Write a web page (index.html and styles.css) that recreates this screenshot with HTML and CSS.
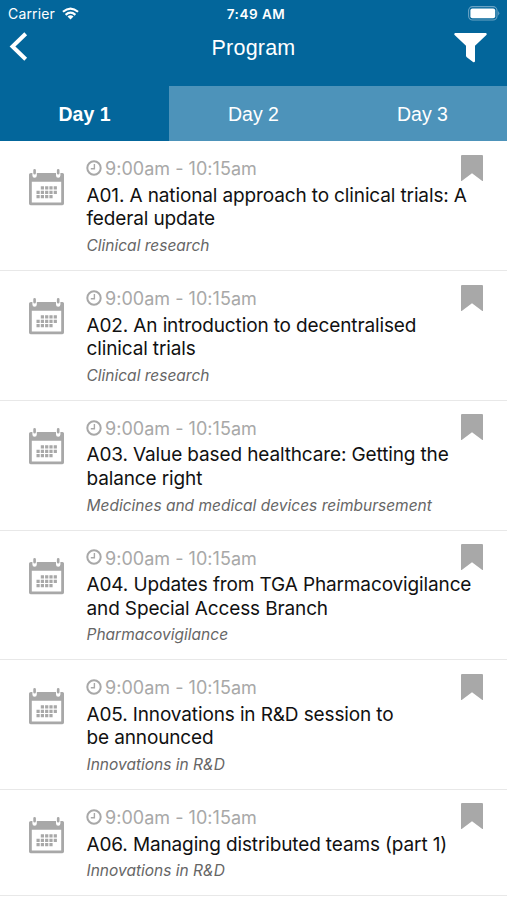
FILE: index.html
```html
<!DOCTYPE html>
<html lang="en">
<head>
<meta charset="utf-8">
<title>Program</title>
<link rel="stylesheet" href="styles.css">
</head>
<body>
<svg class="sprite" aria-hidden="true">
  <symbol id="calendar" viewBox="0 0 36 37">
    <path fill="#a8a8a8" fill-rule="evenodd" d="M2 4H33.5Q35 4 35 5.5V34.5Q35 36.2 33.3 36.2H1.7Q0 36.2 0 34.5V5.5Q0 4 2 4ZM2.8 12.7V33.4H32.2V12.7Z"/>
    <path stroke="#fff" stroke-width="4.4" stroke-linecap="round" d="M5.6 2.5V6.5M29.2 2.5V6.5"/>
    <path stroke="#a8a8a8" stroke-width="2.6" stroke-linecap="round" d="M5.6 1.3V4.2M29.2 1.3V4.2"/>
    <path stroke="#a8a8a8" stroke-width="3.2" stroke-dasharray="3.2 1.1" d="M11.8 18.8H28M7.5 23.3H28M7.5 27.7H23.7"/>
  </symbol>
  <symbol id="clock" viewBox="0 0 16 16">
    <circle cx="8" cy="8" r="6.7" fill="none" stroke="#a8a8a8" stroke-width="2"/>
    <path fill="none" stroke="#a8a8a8" stroke-width="1.4" d="M8.4 4V8.8H4.8"/>
  </symbol>
  <symbol id="bookmark" viewBox="0 0 22 27">
    <path fill="#a8a8a8" d="M1 0H21Q22 0 22 1V25.5Q22 26.5 21 25.8L11 18.3L1 25.8Q0 26.5 0 25.5V1Q0 0 1 0Z"/>
  </symbol>
</svg>
<header class="header">
  <div class="status">
    <div class="carrier"><span class="carrier-name">Carrier</span>
      <svg class="wifi" viewBox="0 0 18 13" fill="none" stroke="#fff" stroke-width="2.3"><path d="M1 4.7Q9-2.2 17 4.7M3.8 7.9Q9 3.4 14.2 7.9"/><path fill="#fff" stroke="none" d="M5.8 9.6Q9 7 12.2 9.6L9 12.8Z"/></svg>
    </div>
    <span class="clock-time">7:49 AM</span>
    <svg class="battery" viewBox="0 0 32 15"><rect x=".6" y=".6" width="28.4" height="13.4" rx="4" fill="none" stroke="#6aa3c4" stroke-width="1.1"/><rect x="2.4" y="2.4" width="24.8" height="9.8" rx="2" fill="#fff"/><path fill="#6aa3c4" d="M30.2 5Q32.4 7.3 30.2 9.6Z"/></svg>
  </div>
  <div class="nav">
    <svg class="back" viewBox="0 0 18 29" fill="none" stroke="#fff" stroke-width="4"><path d="M16.2 1.8L3 14.5L16.2 27.2"/></svg>
    <h1 class="title">Program</h1>
    <svg class="filter" viewBox="0 0 33 30"><path fill="#fff" d="M1.2 0H31.8Q33.4 .6 32.4 2L21 12.8V28.2Q20.6 29.8 19 29L12.8 24.2Q12 23.5 12 22.5V12.8L.6 2Q-.4 .6 1.2 0Z"/></svg>
  </div>
  <nav class="tabs"><span class="tab active">Day 1</span><span class="tab">Day 2</span><span class="tab">Day 3</span></nav>
</header>
<main class="list">
  <article class="item">
    <svg class="calendar"><use href="#calendar"/></svg>
    <div class="body"><div class="time"><svg class="clock"><use href="#clock"/></svg><span class="hours">9:00am - 10:15am</span></div>
      <h2 class="name"><span>A01. A national approach to clinical trials: A</span><br><span>federal update</span></h2><p class="track">Clinical research</p></div>
    <svg class="bookmark"><use href="#bookmark"/></svg>
  </article>
  <article class="item">
    <svg class="calendar"><use href="#calendar"/></svg>
    <div class="body"><div class="time"><svg class="clock"><use href="#clock"/></svg><span class="hours">9:00am - 10:15am</span></div>
      <h2 class="name"><span>A02. An introduction to decentralised</span><br><span>clinical trials</span></h2><p class="track">Clinical research</p></div>
    <svg class="bookmark"><use href="#bookmark"/></svg>
  </article>
  <article class="item">
    <svg class="calendar"><use href="#calendar"/></svg>
    <div class="body"><div class="time"><svg class="clock"><use href="#clock"/></svg><span class="hours">9:00am - 10:15am</span></div>
      <h2 class="name"><span>A03. Value based healthcare: Getting the</span><br><span>balance right</span></h2><p class="track">Medicines and medical devices reimbursement</p></div>
    <svg class="bookmark"><use href="#bookmark"/></svg>
  </article>
  <article class="item">
    <svg class="calendar"><use href="#calendar"/></svg>
    <div class="body"><div class="time"><svg class="clock"><use href="#clock"/></svg><span class="hours">9:00am - 10:15am</span></div>
      <h2 class="name"><span>A04. Updates from TGA Pharmacovigilance</span><br><span>and Special Access Branch</span></h2><p class="track">Pharmacovigilance</p></div>
    <svg class="bookmark"><use href="#bookmark"/></svg>
  </article>
  <article class="item">
    <svg class="calendar"><use href="#calendar"/></svg>
    <div class="body"><div class="time"><svg class="clock"><use href="#clock"/></svg><span class="hours">9:00am - 10:15am</span></div>
      <h2 class="name"><span>A05. Innovations in R&amp;D session to</span><br><span>be announced</span></h2><p class="track">Innovations in R&amp;D</p></div>
    <svg class="bookmark"><use href="#bookmark"/></svg>
  </article>
  <article class="item">
    <svg class="calendar"><use href="#calendar"/></svg>
    <div class="body"><div class="time"><svg class="clock"><use href="#clock"/></svg><span class="hours">9:00am - 10:15am</span></div>
      <h2 class="name"><span>A06. Managing distributed teams (part 1)</span></h2><p class="track">Innovations in R&amp;D</p></div>
    <svg class="bookmark"><use href="#bookmark"/></svg>
  </article>
</main>
</body>
</html>
```
FILE: styles.css
```css
* { box-sizing: border-box; }
body { margin: 0; width: 507px; height: 900px; overflow: hidden; background: #fff; font-family: Inter, "Liberation Sans", sans-serif; }
h1, h2, p { margin: 0; font-weight: 400; }
svg { display: block; flex: none; }
.sprite { display: none; }
.header { height: 141.4px; background: #03669b; color: #fff; display: flex; flex-direction: column; }
.status { height: 27px; display: grid; grid-template-columns: 1fr auto 1fr; align-items: center; padding: 0 7px 0 8px; font-size: 14px; white-space: nowrap; }
.carrier { display: flex; align-items: center; gap: 7px; }
.carrier-name { letter-spacing: .15px; }
.wifi { width: 17px; height: 13px; }
.clock-time { font-size: 13.5px; font-weight: 600; letter-spacing: .5px; padding-left: 4px; }
.battery { width: 32px; height: 15px; justify-self: end; }
.nav { height: 59.4px; display: grid; grid-template-columns: 1fr auto 1fr; align-items: start; padding: 4px 20px 0 9px; }
.back { width: 19px; height: 29px; margin-top: .5px; }
.title { font: 21.5px/34px "Liberation Sans", sans-serif; letter-spacing: .2px; padding-left: 11px; }
.filter { width: 33px; height: 30px; margin-top: 2px; justify-self: end; }
.tabs { flex: 1; display: grid; grid-template-columns: repeat(3, 1fr); font: 19.5px "Liberation Sans", sans-serif; }
.tab { display: flex; align-items: center; justify-content: center; padding-top: 2px; background: #4d93ba; }
.active { background: transparent; font-weight: 700; }
.item { display: flex; align-items: flex-start; border-bottom: 1px solid #e8e8e8; padding: 13px 24px 10.3px 29px; }
.calendar { width: 36px; height: 37px; margin: 14.3px 21.5px 0 0; }
.body { flex: 1; min-width: 0; white-space: nowrap; }
.time { display: flex; align-items: center; gap: 3px; height: 29px; font-size: 18px; color: #a8a8a8; }
.clock { width: 16px; height: 16px; margin: -1.4px 0 0 -.5px; }
.hours { letter-spacing: .03px; }
.name { padding-top: .6px; font-size: 19px; line-height: 23.4px; color: #111; letter-spacing: -.13px; }
.track { margin-top: 2.5px; font-size: 15.5px; line-height: 26.5px; font-style: italic; color: #666; }
.bookmark { width: 22px; height: 27px; margin-top: .5px; }
```
